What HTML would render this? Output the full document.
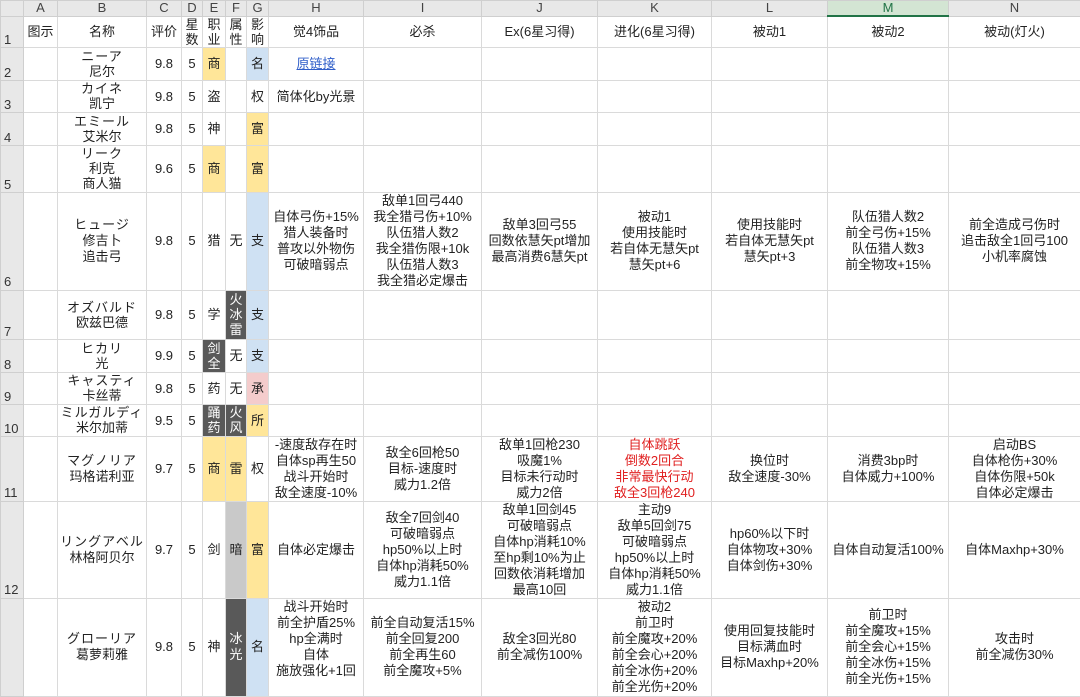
<!DOCTYPE html>
<html><head><meta charset="utf-8"><style>
body{margin:0;width:1080px;height:678px;overflow:hidden;background:#fff;font-family:"Liberation Sans","Noto Sans CJK SC",sans-serif;}
table{border-collapse:collapse;table-layout:fixed;width:1080px;}
td{border:1px solid #dadada;padding:0;text-align:center;vertical-align:middle;font-size:13px;line-height:15px;color:#222;white-space:nowrap;overflow:hidden;}
tr.h td{background:#e8e8e8;color:#444;font-size:13px;line-height:14px;border-color:#cfcfcf;}
tr.h td.m{background:#d3e5d3;color:#217346;border-bottom:2px solid #217346;}
td.n{background:#e8e8e8;color:#333;text-align:left;vertical-align:bottom;padding-left:3px;border-color:#cfcfcf;line-height:15px;}
.y{background:#ffe699;}.b{background:#cfe1f3;}.p{background:#f4cccc;}.d{background:#595959;color:#fff;}.g{background:#c9c9c9;}
.r{color:#e02020;}
.k{letter-spacing:1px;}
tr.t6 td{line-height:16px;}
a{color:#2f5ec9;text-decoration:underline;}
</style></head><body>
<table>
<colgroup><col style="width:23px"><col style="width:34px"><col style="width:89px"><col style="width:35px"><col style="width:21px"><col style="width:23px"><col style="width:21px"><col style="width:22px"><col style="width:95px"><col style="width:118px"><col style="width:116px"><col style="width:114px"><col style="width:116px"><col style="width:121px"><col style="width:132px"></colgroup>
<tr class="h" style="height:15px"><td></td><td>A</td><td>B</td><td>C</td><td>D</td><td>E</td><td>F</td><td>G</td><td>H</td><td>I</td><td>J</td><td>K</td><td>L</td><td class="m">M</td><td>N</td></tr>
<tr style="height:31px"><td class="n">1</td><td>图示</td><td>名称</td><td>评价</td><td>星<br>数</td><td>职<br>业</td><td>属<br>性</td><td>影<br>响</td><td>觉4饰品</td><td>必杀</td><td>Ex(6星习得)</td><td>进化(6星习得)</td><td>被动1</td><td>被动2</td><td>被动(灯火)</td></tr>
<tr style="height:33px"><td class="n">2</td><td></td><td><span class="k">ニーア</span><br>尼尔</td><td>9.8</td><td>5</td><td class="y">商</td><td></td><td class="b">名</td><td><a>原链接</a></td><td></td><td></td><td></td><td></td><td></td><td></td></tr>
<tr style="height:32px"><td class="n">3</td><td></td><td><span class="k">カイネ</span><br>凯宁</td><td>9.8</td><td>5</td><td>盗</td><td></td><td>权</td><td>简体化by光景</td><td></td><td></td><td></td><td></td><td></td><td></td></tr>
<tr style="height:33px"><td class="n">4</td><td></td><td><span class="k">エミール</span><br>艾米尔</td><td>9.8</td><td>5</td><td>神</td><td></td><td class="y">富</td><td></td><td></td><td></td><td></td><td></td><td></td><td></td></tr>
<tr style="height:47px"><td class="n">5</td><td></td><td><span class="k">リーク</span><br>利克<br>商人猫</td><td>9.6</td><td>5</td><td class="y">商</td><td></td><td class="y">富</td><td></td><td></td><td></td><td></td><td></td><td></td><td></td></tr>
<tr class="t6" style="height:98px"><td class="n">6</td><td></td><td><span class="k">ヒュージ</span><br>修吉卜<br>追击弓</td><td>9.8</td><td>5</td><td>猎</td><td>无</td><td class="b">支</td><td>自体弓伤+15%<br>猎人装备时<br>普攻以外物伤<br>可破暗弱点</td><td>敌单1回弓440<br>我全猎弓伤+10%<br>队伍猎人数2<br>我全猎伤限+10k<br>队伍猎人数3<br>我全猎必定爆击</td><td>敌单3回弓55<br>回数依慧矢pt增加<br>最高消费6慧矢pt</td><td>被动1<br>使用技能时<br>若自体无慧矢pt<br>慧矢pt+6</td><td>使用技能时<br>若自体无慧矢pt<br>慧矢pt+3</td><td>队伍猎人数2<br>前全弓伤+15%<br>队伍猎人数3<br>前全物攻+15%</td><td>前全造成弓伤时<br>追击敌全1回弓100<br>小机率腐蚀</td></tr>
<tr style="height:49px"><td class="n">7</td><td></td><td><span class="k">オズバルド</span><br>欧兹巴德</td><td>9.8</td><td>5</td><td>学</td><td class="d">火<br>冰<br>雷</td><td class="b">支</td><td></td><td></td><td></td><td></td><td></td><td></td><td></td></tr>
<tr style="height:33px"><td class="n">8</td><td></td><td><span class="k">ヒカリ</span><br>光</td><td>9.9</td><td>5</td><td class="d">剑<br>全</td><td>无</td><td class="b">支</td><td></td><td></td><td></td><td></td><td></td><td></td><td></td></tr>
<tr style="height:32px"><td class="n">9</td><td></td><td><span class="k">キャスティ</span><br>卡丝蒂</td><td>9.8</td><td>5</td><td>药</td><td>无</td><td class="p">承</td><td></td><td></td><td></td><td></td><td></td><td></td><td></td></tr>
<tr style="height:32px"><td class="n">10</td><td></td><td><span class="k">ミルガルディ</span><br>米尔加蒂</td><td>9.5</td><td>5</td><td class="d">踊<br>药</td><td class="d">火<br>风</td><td class="y">所</td><td></td><td></td><td></td><td></td><td></td><td></td><td></td></tr>
<tr class="t6" style="height:65px"><td class="n">11</td><td></td><td><span class="k">マグノリア</span><br>玛格诺利亚</td><td>9.7</td><td>5</td><td class="y">商</td><td class="y">雷</td><td>权</td><td>-速度敌存在时<br>自体sp再生50<br>战斗开始时<br>敌全速度-10%</td><td>敌全6回枪50<br>目标-速度时<br>威力1.2倍</td><td>敌单1回枪230<br>吸魔1%<br>目标未行动时<br>威力2倍</td><td class="r">自体跳跃<br>倒数2回合<br>非常最快行动<br>敌全3回枪240</td><td>换位时<br>敌全速度-30%</td><td>消费3bp时<br>自体威力+100%</td><td>启动BS<br>自体枪伤+30%<br>自体伤限+50k<br>自体必定爆击</td></tr>
<tr class="t6" style="height:97px"><td class="n">12</td><td></td><td><span class="k">リングアベル</span><br>林格阿贝尔</td><td>9.7</td><td>5</td><td>剑</td><td class="g">暗</td><td class="y">富</td><td>自体必定爆击</td><td>敌全7回剑40<br>可破暗弱点<br>hp50%以上时<br>自体hp消耗50%<br>威力1.1倍</td><td>敌单1回剑45<br>可破暗弱点<br>自体hp消耗10%<br>至hp剩10%为止<br>回数依消耗增加<br>最高10回</td><td>主动9<br>敌单5回剑75<br>可破暗弱点<br>hp50%以上时<br>自体hp消耗50%<br>威力1.1倍</td><td>hp60%以下时<br>自体物攻+30%<br>自体剑伤+30%</td><td>自体自动复活100%</td><td>自体Maxhp+30%</td></tr>
<tr class="t6" style="height:98px"><td class="n" style="vertical-align:top"></td><td></td><td><span class="k">グローリア</span><br>葛萝莉雅</td><td>9.8</td><td>5</td><td>神</td><td class="d">冰<br>光</td><td class="b">名</td><td>战斗开始时<br>前全护盾25%<br>hp全满时<br>自体<br>施放强化+1回<br>&nbsp;</td><td>前全自动复活15%<br>前全回复200<br>前全再生60<br>前全魔攻+5%</td><td>敌全3回光80<br>前全减伤100%</td><td>被动2<br>前卫时<br>前全魔攻+20%<br>前全会心+20%<br>前全冰伤+20%<br>前全光伤+20%</td><td>使用回复技能时<br>目标满血时<br>目标Maxhp+20%</td><td>前卫时<br>前全魔攻+15%<br>前全会心+15%<br>前全冰伤+15%<br>前全光伤+15%</td><td>攻击时<br>前全减伤30%</td></tr>
</table>
</body></html>
